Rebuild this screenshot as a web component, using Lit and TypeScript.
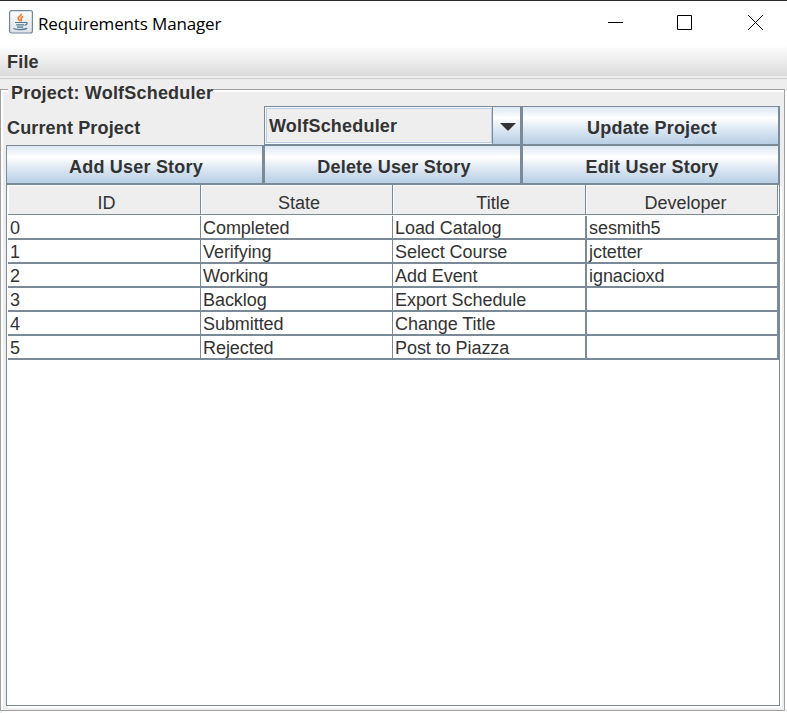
import { LitElement, html, css, svg } from "lit";
import { customElement, state } from "lit/decorators.js";

interface Story {
  id: number;
  state: string;
  title: string;
  developer: string;
}

const javaCup = svg`
  <svg class="cup" width="24" height="24" viewBox="0 0 24 24" fill="none">
    <defs>
      <linearGradient id="tile" x1="0" y1="0" x2="0" y2="1">
        <stop offset="0" stop-color="#ffffff" />
        <stop offset="1" stop-color="#dde1e5" />
      </linearGradient>
    </defs>
    <rect x=".6" y=".6" width="22.8" height="22.4" rx="2" fill="url(#tile)" stroke="#7088a0" stroke-width="1.200" />
    <path d="M12.200 3.800c.8 2.200-3.600 2.800-3.100 4.800.2.900 1.700 1.500 2 2.800M14.200 6.600c-2.200.9-2.600 1.700-1.900 2.600.4.700.2 1.300-.4 1.900" stroke="#ee7d2c" stroke-width="1.700" />
    <path d="M6 12.500h9.800M7.200 14.900h7.800M8 17.100h6.200M15.800 12.500c3.200-.6 3.200 2-.2 2.900" stroke="#4f7896" stroke-width="1.200" />
    <path d="M4.400 18.600c2.500 1.400 10.500 1.400 13.800-.2" stroke="#4f7896" stroke-width="1.200" />
  </svg>`;

@customElement("app-root")
export class AppRoot extends LitElement {
  @state() private project = "WolfScheduler";
  @state() private stories: Story[] = [
    { id: 0, state: "Completed", title: "Load Catalog", developer: "sesmith5" },
    { id: 1, state: "Verifying", title: "Select Course", developer: "jctetter" },
    { id: 2, state: "Working", title: "Add Event", developer: "ignacioxd" },
    { id: 3, state: "Backlog", title: "Export Schedule", developer: "" },
    { id: 4, state: "Submitted", title: "Change Title", developer: "" },
    { id: 5, state: "Rejected", title: "Post to Piazza", developer: "" },
  ];

  static styles = css`
    :host {
      display: flex;
      flex-direction: column;
      box-sizing: border-box;
      width: 787px;
      height: 713px;
      overflow: hidden;
      background: #eee;
      color: #333;
      font: bold 18px/20px "Liberation Sans", Arial, sans-serif;
      letter-spacing: 0.2px;
    }
    * {
      box-sizing: border-box;
    }
    .titlebar {
      flex: none;
      display: flex;
      align-items: flex-start;
      height: 45px;
      padding-left: 9px;
      border-top: 1px solid #2b2b2b;
      background: #fff;
      color: #000;
    }
    .cup {
      flex: none;
      margin-top: 9px;
    }
    .caption {
      flex: 1;
      margin: 11px 0 0 5px;
      font: 17px/24px "Open Sans", "Noto Sans", sans-serif;
      letter-spacing: -0.15px;
    }
    .controls {
      display: flex;
      margin-right: 23px;
      padding-top: 14px;
    }
    .controls svg + svg {
      margin-left: 53px;
    }
    .controls svg:last-child {
      margin-left: 55px;
    }
    .menubar {
      flex: none;
      height: 34px;
      padding: 7px 7px 0;
      background: linear-gradient(#fff, #dadada 31px, #eee 31px);
      border-bottom: 1px solid #ccc;
    }
    .group {
      flex: 1;
      display: flex;
      flex-direction: column;
      position: relative;
      margin: 10px 0 0;
      padding: 15px 2px 2px 6px;
    }
    .group::after {
      content: "";
      position: absolute;
      inset: 0 2px 2px 0;
      border: 1px solid #a0a0a0;
      box-shadow: 2px 2px #fff, inset 2px 2px #fff;
      pointer-events: none;
    }
    .legend {
      position: absolute;
      z-index: 1;
      left: 8px;
      top: -6px;
      padding: 0 0 0 3px;
      background: #eee;
      width: 205px;
      white-space: nowrap;
    }
    .grid {
      flex: none;
      display: grid;
      margin-top: 2px;
      grid-template-columns: repeat(3, 258px);
      grid-auto-rows: 39px;
    }
    .label {
      padding: 12px 0 0 1px;
      letter-spacing: 0.15px;
    }
    .metal {
      display: flex;
      align-items: center;
      justify-content: center;
      padding: 4px 0 0 3px;
      border: 1px solid #7a8a99;
      border-right-width: 2px;
      background: linear-gradient(#dde8f3, #fff 30%, #dde8f3 60%, #b8cfe5);
    }
    .combo {
      display: flex;
      border: 1px solid #7a8a99;
      border-right: 0;
      background: #eee;
    }
    .value {
      width: 226px;
      padding: 7px 0 0 2px;
      border: 1px solid #b8cfe5;
      outline: 1px solid #f6f6f6;
      margin: 1px 0 1px 1px;
    }
    .arrow {
      width: 30px;
      border-width: 0 2px 0 1px;
      padding: 2px 0 0 2px;
    }
    .scroll {
      flex: none;
      width: 774px;
      height: 522px;
      border: 1px solid #7a8a99;
      background: #fff;
      box-shadow: 2px 2px #fff;
      font-weight: normal;
      letter-spacing: -0.06px;
      padding-left: 1px;
    }
    .row {
      display: grid;
      grid-template-columns: 193px 192px 193px 193px;
      height: 24px;
    }
    .head {
      height: 31px;
      text-align: center;
      letter-spacing: 0;
    }
    .head > span {
      margin-bottom: 1px;
      padding: 8px 0 0 5px;
      background: #eee;
      border: solid #7a8a99;
      border-width: 0 1px 1px 0;
      box-shadow: inset 1px 1px #fff;
    }
    .head > span:nth-child(n + 3) {
      padding-left: 8px;
    }
    .head > span:last-child {
      margin-right: 1px;
    }
    .row:not(.head) > span {
      padding: 2px 0 0 2px;
      border: solid #7a8a99;
      border-width: 0 1px 2px 0;
    }
    .row:not(.head) > span:nth-child(3) {
      margin-right: -1px;
      border-right-width: 2px;
    }
    .row:not(.head) > span:nth-child(4) {
      padding-left: 3px;
      border-right-width: 2px;
    }
  `;

  render() {
    return html`
      <header class="titlebar">
        ${javaCup}
        <span class="caption">Requirements Manager</span>
        <div class="controls">
          <svg width="16" height="16"><path d="M0 7.500h15" stroke="#000" /></svg>
          <svg width="16" height="16"><path d="M.5.500h14v14H.500z" fill="none" stroke="#000" /></svg>
          <svg width="16" height="16"><path d="M0 0l15 15M15 0L0 15" stroke="#000" /></svg>
        </div>
      </header>
      <nav class="menubar">File</nav>
      <section class="group">
        <span class="legend">Project: ${this.project}</span>
        <div class="grid">
          <span class="label">Current Project</span>
          <div class="combo">
            <span class="value">${this.project}</span>
            <span class="metal arrow">
              <svg width="16" height="8"><path d="M0 0h16L8.500 7.500h-1z" fill="#333" /></svg>
            </span>
          </div>
          <div class="metal">Update Project</div>
          <div class="metal">Add User Story</div>
          <div class="metal">Delete User Story</div>
          <div class="metal">Edit User Story</div>
        </div>
        <div class="scroll">
          <div class="row head">
            ${["ID", "State", "Title", "Developer"].map((h) => html`<span>${h}</span>`)}
          </div>
          ${this.stories.map(
            (s) => html`<div class="row">
              <span>${s.id}</span><span>${s.state}</span><span>${s.title}</span><span>${s.developer}</span>
            </div>`
          )}
        </div>
      </section>
    `;
  }
}
